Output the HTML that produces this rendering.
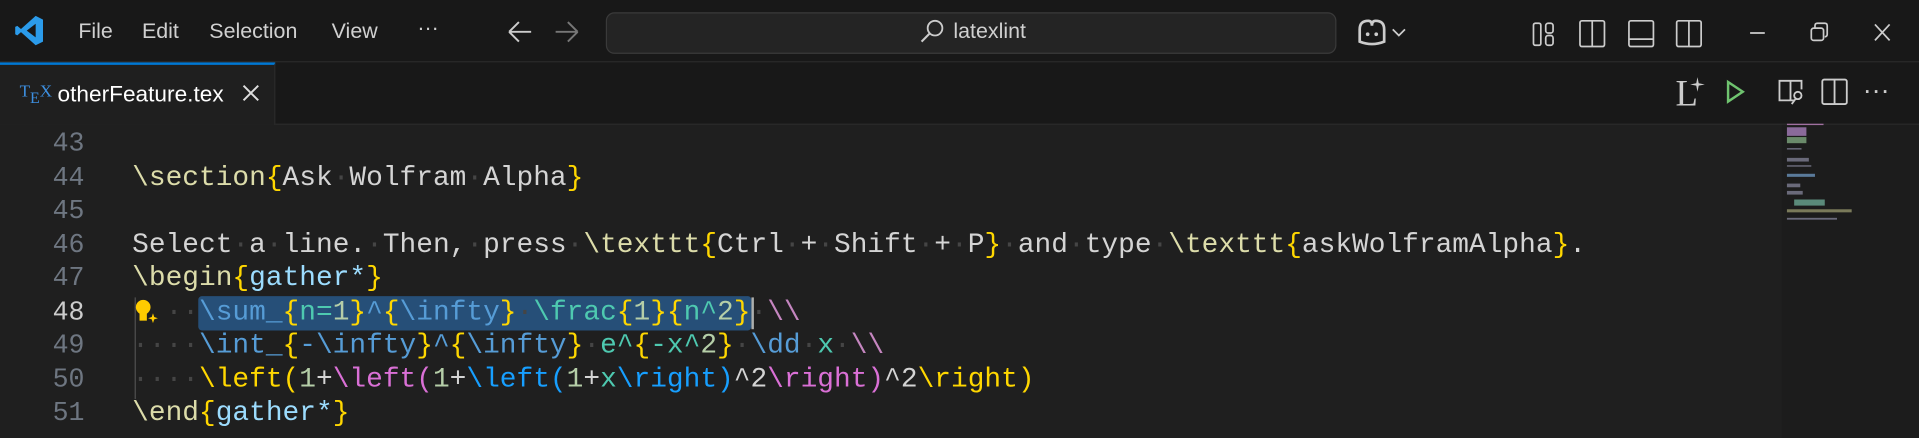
<!DOCTYPE html>
<html><head><meta charset="utf-8"><style>
*{margin:0;padding:0;box-sizing:border-box}
html,body{width:1919px;height:438px;background:#1f1f1f;overflow:hidden}
body{font-family:"Liberation Sans",sans-serif;color:#ccc}
#wrap{position:absolute;left:0;top:0;width:1568px;height:358px;transform:scale(1.22385);transform-origin:0 0;background:#1f1f1f}
.abs{position:absolute}
#title{left:0;top:0;width:1568px;height:51px;background:#181818;border-bottom:1px solid #2b2b2b}
.menu{top:15px;font-size:17.5px;color:#d0d0d0}
#tabs{left:0;top:51px;width:1568px;height:51px;background:#181818;border-bottom:1px solid #2b2b2b}
#tab{left:0;top:51px;width:225px;height:51px;background:#1f1f1f;border-top:2px solid #0078d4;border-right:1px solid #2b2b2b}
.code{font-family:"Liberation Mono",monospace;font-size:22.75px;line-height:27.5px;white-space:pre}
.ln{left:0;width:69px;text-align:right;color:#6e7681;font-size:21.7px}
.y{color:#ffd700}.f{color:#dcdcaa}.t{color:#d4d4d4}.lb{color:#9cdcfe}.b{color:#569cd6}.tl{color:#4ec9b0}.n{color:#b5cea8}.p{color:#c586c0}.d{color:#454545}.bl{color:#179fff}.pk{color:#da70d6}
</style></head><body><div id="wrap">
<div id="title" class="abs"></div>
<svg class="abs" style="left:12px;top:12px" width="24" height="26" viewBox="0 0 28 30"><path d="M20 1 L27 4.5 V25.5 L20 29 L6 16.5 L2.5 19.5 L0.5 18.5 V11.5 L2.5 10.5 L6 13.5 Z M20 8.5 L11.5 15 L20 21.5 Z" fill="#2b9bea"/></svg>
<div class="abs menu" style="left:64px">File</div>
<div class="abs menu" style="left:116px">Edit</div>
<div class="abs menu" style="left:171px">Selection</div>
<div class="abs menu" style="left:271px">View</div>
<div class="abs menu" style="left:341px;top:12px">···</div>
<svg class="abs" style="left:414px;top:16px" width="60" height="20"><path d="M2 10 H20 M2 10 L10 2 M2 10 L10 18" stroke="#ccc" stroke-width="1.6" fill="none"/><path d="M40 10 H58 M58 10 L50 2 M58 10 L50 18" stroke="#777" stroke-width="1.6" fill="none"/></svg>
<div class="abs" style="left:495px;top:10px;width:597px;height:34px;background:#242424;border:1px solid #3a3a3a;border-radius:7px"></div>
<svg class="abs" style="left:750px;top:15px" width="24" height="22"><circle cx="14" cy="8" r="6" stroke="#ccc" stroke-width="1.5" fill="none"/><path d="M9.5 12.5 L3 19" stroke="#ccc" stroke-width="1.7"/></svg>
<div class="abs" style="left:779px;top:15px;font-size:17.5px;color:#d0d0d0">latexlint</div>
<svg class="abs" style="left:1108px;top:14px" width="46" height="24"><path d="M3 20 V10 Q3 3 10 3 Q13 3 13 7 Q13 3 16 3 Q23 3 23 10 V20 Q13 24 3 20Z" stroke="#ccc" stroke-width="2.2" fill="none"/><circle cx="9.5" cy="14" r="1.5" fill="#ccc"/><circle cx="16.5" cy="14" r="1.5" fill="#ccc"/><path d="M30 10 L35 15 L40 10" stroke="#ccc" stroke-width="1.4" fill="none"/></svg>
<svg class="abs" style="left:1250px;top:14px" width="180" height="28" stroke="#ccc" stroke-width="1.4" fill="none"><rect x="3" y="5" width="6" height="18" rx="1.5"/><rect x="13" y="5" width="6" height="8" rx="2"/><rect x="13" y="15" width="6" height="8" rx="2"/><rect x="41" y="3" width="20" height="21" rx="1.5"/><path d="M51 3 V24"/><rect x="81" y="3" width="20" height="21" rx="1.5"/><path d="M81 18 H101"/><rect x="120" y="3" width="20" height="21" rx="1.5"/><path d="M130 3 V24"/></svg>
<svg class="abs" style="left:1428px;top:16px" width="130" height="22" stroke="#ccc" stroke-width="1.4" fill="none"><path d="M2 11 H14"/><rect x="52" y="7" width="10" height="10" rx="2"/><path d="M55 7 V5 Q55 3 57 3 H63 Q65 3 65 5 V12 Q65 14 63 14"/><path d="M104 4 L116 17 M116 4 L104 17"/></svg>
<div id="tabs" class="abs"></div>
<div id="tab" class="abs"></div>
<div class="abs" style="left:16px;top:67px;color:#3d8fe0;font-size:14px;font-family:'Liberation Serif',serif">T<span style="position:relative;top:5px;font-size:13px">E</span>X</div>
<div class="abs" style="left:47px;top:66px;font-size:18.5px;color:#fff">otherFeature.tex</div>
<svg class="abs" style="left:197px;top:68px" width="16" height="16"><path d="M2 2 L14 14 M14 2 L2 14" stroke="#ddd" stroke-width="1.6"/></svg>
<div class="abs" style="left:1369px;top:60px;font-family:'Liberation Serif',serif;font-size:30px;color:#ccc">L</div>
<svg class="abs" style="left:1380px;top:62px" width="14" height="14"><path d="M7 1 L8 6 L13 7 L8 8 L7 13 L6 8 L1 7 L6 6Z" fill="#ccc"/></svg>
<svg class="abs" style="left:1406px;top:62px" width="120" height="30" fill="none" stroke-width="1.5"><path d="M6 5 L18 13 L6 21 Z" stroke="#6fc36f" stroke-width="2"/><path d="M60 20 H48 V4 H66 V11 M57 4 V20" stroke="#ccc"/><circle cx="63" cy="16" r="3" stroke="#ccc"/><path d="M61 19 L58 23" stroke="#ccc"/><rect x="83" y="3" width="20" height="20" rx="1.5" stroke="#ccc"/><path d="M93 3 V23" stroke="#ccc"/></svg>
<div class="abs" style="left:1522px;top:61px;font-size:22px;color:#ccc">···</div>
<div class="abs" style="left:1456px;top:102px;width:112px;height:256px;background:#1c1c1c"></div>
<svg class="abs" style="left:1460px;top:101px" width="70" height="82">
<g fill="#6a6a7a"><rect x="0" y="0" width="30" height="1.2" fill="#a070a0"/><rect x="0" y="3" width="16" height="7" fill="#8a6a9a"/><rect x="0" y="11" width="16" height="5" fill="#6a8a6a"/><rect x="0" y="20" width="12" height="1.2"/><rect x="0" y="28" width="18" height="3"/><rect x="0" y="34" width="20" height="1.2"/><rect x="0" y="41" width="23" height="2.5" fill="#5a7a9a"/><rect x="0" y="49" width="11" height="3"/><rect x="0" y="55" width="13" height="3"/><rect x="6" y="62" width="25" height="5" fill="#5a8a7a"/><rect x="0" y="70" width="53" height="2.5" fill="#7a7a5a"/><rect x="0" y="77" width="41" height="1.5"/></g></svg>
<div class="abs code ln" style="top:104px">43
44
45
46
47
<span style="color:#ccc">48</span>
49
50
51</div>
<div class="abs" style="left:162px;top:242px;width:452px;height:28px;background:#264f78;border-radius:3px"></div>
<div class="abs" style="left:614px;top:243px;width:2px;height:26px;background:#aeafad"></div>
<div class="abs" style="left:110px;top:243px;width:1px;height:83px;background:#505050"></div>
<svg class="abs" style="left:108px;top:243px" width="24" height="24"><circle cx="9" cy="8" r="6" fill="#ffcc00"/><rect x="6" y="13" width="6" height="6" fill="#ffcc00"/><path d="M17 13 L18 16 L21 17 L18 18 L17 21 L16 18 L13 17 L16 16Z" fill="#ffcc00"/></svg>
<div class="abs code" style="left:108px;top:104px">
<span class="f">\section</span><span class="y">{</span><span class="t">Ask<span class="d">·</span>Wolfram<span class="d">·</span>Alpha</span><span class="y">}</span>

<span class="t">Select<span class="d">·</span>a<span class="d">·</span>line.<span class="d">·</span>Then,<span class="d">·</span>press<span class="d">·</span></span><span class="f">\texttt</span><span class="y">{</span><span class="t">Ctrl<span class="d">·</span>+<span class="d">·</span>Shift<span class="d">·</span>+<span class="d">·</span>P</span><span class="y">}</span><span class="d">·</span><span class="t">and<span class="d">·</span>type<span class="d">·</span></span><span class="f">\texttt</span><span class="y">{</span><span class="t">askWolframAlpha</span><span class="y">}</span><span class="t">.</span>
<span class="f">\begin</span><span class="y">{</span><span class="lb">gather*</span><span class="y">}</span>
<span class="d">  ··</span><span class="b">\sum_</span><span class="y">{</span><span class="tl">n=</span><span class="n">1</span><span class="y">}</span><span class="b">^</span><span class="y">{</span><span class="b">\infty</span><span class="y">}</span><span class="d">·</span><span class="tl">\frac</span><span class="y">{</span><span class="n">1</span><span class="y">}{</span><span class="tl">n^</span><span class="n">2</span><span class="y">}</span><span class="d">·</span><span class="p">\\</span>
<span class="d">····</span><span class="b">\int_</span><span class="y">{</span><span class="b">-\infty</span><span class="y">}</span><span class="b">^</span><span class="y">{</span><span class="b">\infty</span><span class="y">}</span><span class="d">·</span><span class="tl">e^</span><span class="y">{</span><span class="tl">-x^</span><span class="n">2</span><span class="y">}</span><span class="d">·</span><span class="b">\dd</span><span class="d">·</span><span class="tl">x</span><span class="d">·</span><span class="p">\\</span>
<span class="d">····</span><span class="y">\left(</span><span class="n">1</span><span class="t">+</span><span class="pk">\left(</span><span class="n">1</span><span class="t">+</span><span class="bl">\left(</span><span class="n">1</span><span class="t">+</span><span class="tl">x</span><span class="bl">\right)</span><span class="t">^2</span><span class="pk">\right)</span><span class="t">^2</span><span class="y">\right)</span>
<span class="f">\end</span><span class="y">{</span><span class="lb">gather*</span><span class="y">}</span></div>
</div></body></html>
